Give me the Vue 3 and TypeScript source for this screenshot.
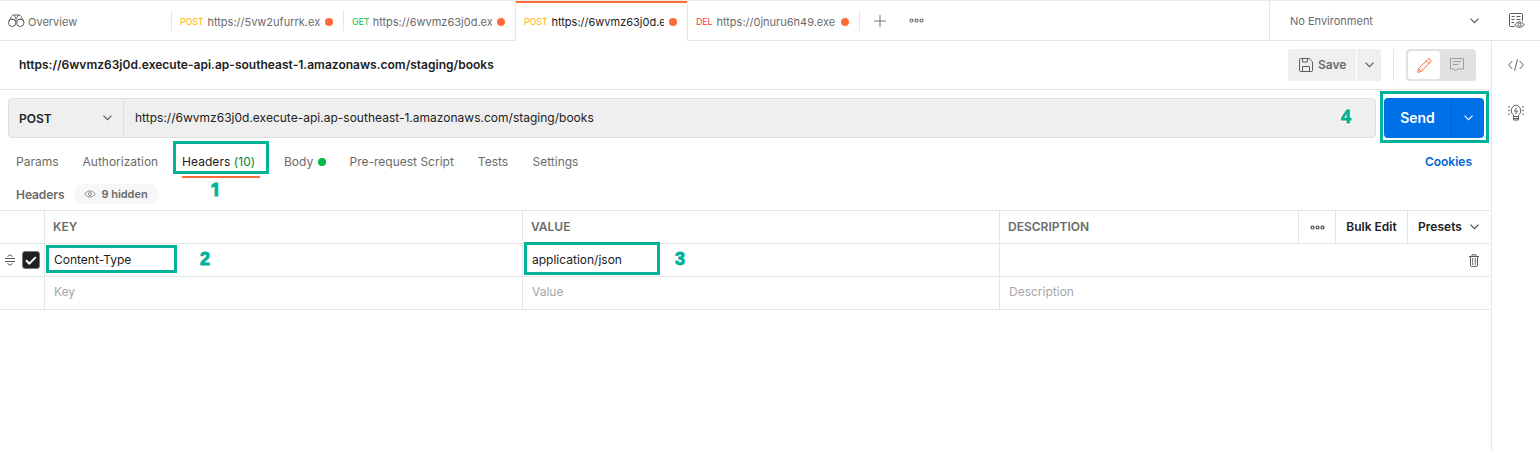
<script setup lang="ts">
interface RequestTab {
  method: 'POST' | 'GET' | 'DEL'
  url: string
  active?: boolean
}

const tabs: RequestTab[] = [
  { method: 'POST', url: 'https://5vw2ufurrk.ex' },
  { method: 'GET', url: 'https://6wvmz63j0d.ex' },
  { method: 'POST', url: 'https://6wvmz63j0d.e', active: true },
  { method: 'DEL', url: 'https://0jnuru6h49.exe' },
]
const url = 'https://6wvmz63j0d.execute-api.ap-southeast-1.amazonaws.com/staging/books'
</script>

<template>
  <div class="app">
    <header class="topbar">
      <div class="overview">
        <svg width="17" height="14" viewBox="0 0 17 14" class="line">
          <circle cx="4.200" cy="8.800" r="3.700" /><circle cx="12.300" cy="8.800" r="3.700" />
          <path d="M.7 7.500 3.500 2.400Q4.200 1 5.500 1h5.500q1.300 0 2 1.400l2.800 5.100M5.500 1Q7 1.300 7.200 3L8.200 5.500 9.300 3Q9.500 1.300 11 1M3.500 5.200Q6.500 4.800 8.200 7.800 10 4.800 13 5.200" stroke-width=".9" />
        </svg>
        <span>Overview</span>
      </div>
      <div v-for="(tab, i) in tabs" :key="i" class="tab" :class="{ active: tab.active, prior: i === 1 }">
        <span class="method" :class="tab.method.toLowerCase()">{{ tab.method }}</span>
        <span class="tab-url">{{ tab.url }}</span>
        <i class="unsaved"></i>
      </div>
      <svg class="plus" width="12" height="12" viewBox="0 0 12 12"><path d="M6 0v12M0 6h12" /></svg>
      <svg class="dots" width="15" height="5" viewBox="0 0 15 5">
        <circle cx="2.500" cy="2.500" r="1.500" /><circle cx="7.500" cy="2.500" r="1.500" /><circle cx="12.500" cy="2.500" r="1.500" />
      </svg>
      <div class="environment">
        <span>No Environment</span>
        <svg class="chev" width="9" height="6" viewBox="0 0 9 6"><path d="M.5.7l4 4 4-4" /></svg>
      </div>
      <div class="env-view">
        <svg width="16" height="16" viewBox="0 0 16 16" class="line">
          <path d="M5.500 13.500h-4a1 1 0 0 1-1-1v-11a1 1 0 0 1 1-1h11a1 1 0 0 1 1 1V8M2.500 3.500h3M7.500 3.500h4M2.500 6.500h3M7.500 6.500h4M2.500 9.500h2.500" />
          <path d="M5.800 11.700Q10.500 5.900 15.300 11.700 10.500 17.200 5.800 11.700z" />
          <circle cx="10.500" cy="11.600" r="1.500" />
        </svg>
      </div>
    </header>

    <div class="body">
      <main>
        <section class="title-row">
          <h1>{{ url }}</h1>
          <div class="save">
            <svg width="14" height="14" viewBox="0 0 14 14" class="line">
              <path d="M1.500.5h8.700l3.300 3.300v8.700a1 1 0 0 1-1 1h-11a1 1 0 0 1-1-1v-11a1 1 0 0 1 1-1zM3.500.5v3.500h5V.5M3.500 13.500v-5h7v5" />
            </svg>
            <span>Save</span>
          </div>
          <div class="save-more"><svg class="chev" width="9" height="6" viewBox="0 0 9 6"><path d="M.5.7l4 4 4-4" /></svg></div>
          <i class="rule"></i>
          <div class="toggle">
            <div class="edit">
              <svg width="15" height="15" viewBox="0 0 15 15">
                <path d="M.6 14.400 1.500 10.700 10.800 1.400q1.200-1.200 2.500.1t.2 2.500L4.200 13.400zM9.400 2.800l2.800 2.800M1.700 10.900l2.400 2.400" />
              </svg>
            </div>
            <div class="comment">
              <svg width="14" height="14" viewBox="0 0 14 14">
                <path d="M.5.5h13v10.500H7.500L5.500 13 3.800 11H.5zM3 3.500h8M3 6.500h5.500" />
              </svg>
            </div>
          </div>
        </section>

        <section class="request-row">
          <div class="request">
            <div class="verb">
              <b>POST</b>
              <svg class="chev" width="9" height="6" viewBox="0 0 9 6"><path d="M.5.7l4 4 4-4" /></svg>
            </div>
            <div class="address">{{ url }}</div>
          </div>
          <div class="send">
            <b>Send</b>
            <div class="send-more"><svg class="chev" width="9" height="6" viewBox="0 0 9 6"><path d="M.5.7l4 4 4-4" /></svg></div>
          </div>
        </section>

        <nav class="sections">
          <span class="s-params">Params</span>
          <span class="s-auth">Authorization</span>
          <span class="s-headers">Headers <em>(10)</em></span>
          <span class="s-body">Body<i></i></span>
          <span class="s-script">Pre-request Script</span>
          <span class="s-tests">Tests</span>
          <span class="s-settings">Settings</span>
          <b class="cookies">Cookies</b>
        </nav>

        <div class="subhead">
          <span class="subtitle">Headers</span>
          <span class="hidden">
            <svg width="12" height="8" viewBox="0 0 12 8">
              <path d="M.6 4Q6-2.400 11.400 4 6 10.400.6 4z" /><circle cx="6" cy="4" r="1.500" />
            </svg>
            <span>9 hidden</span>
          </span>
        </div>

        <div class="grid">
          <div class="row head">
            <div></div>
            <div>KEY</div>
            <div>VALUE</div>
            <div>DESCRIPTION</div>
            <div class="tool">
              <svg class="dots" width="15" height="5" viewBox="0 0 15 5">
                <circle cx="2.500" cy="2.500" r="1.500" /><circle cx="7.500" cy="2.500" r="1.500" /><circle cx="12.500" cy="2.500" r="1.500" />
              </svg>
            </div>
            <div class="tool bulk">Bulk Edit</div>
            <div class="tool presets">
              <span>Presets</span>
              <svg class="chev" width="9" height="6" viewBox="0 0 9 6"><path d="M.5.7l4 4 4-4" /></svg>
            </div>
          </div>
          <div class="row">
            <div class="controls">
              <svg width="10" height="12" viewBox="0 0 10 12" class="line">
                <path d="M0 4.500h10M0 7.500h10M2.500 2.500l2.500-1.700 2.500 1.700M2.500 9.500l2.500 1.700 2.500-1.700" />
              </svg>
              <i class="check">
                <svg width="12" height="9" viewBox="0 0 12 9"><path d="M1 4.300 4.300 7.600 10.800 1.100" /></svg>
              </i>
            </div>
            <div>Content-Type</div>
            <div>application/json</div>
            <div class="last">
              <svg width="10" height="13" viewBox="0 0 10 13" class="line">
                <path d="M0 2.500h10M3 2V.8h4V2M1.500 2.500v9a.9.9 0 0 0 .9.900h5.200a.9.900 0 0 0 .9-.900v-9" /><path d="M3.700 4v7M6.300 4v7" stroke-width=".9" />
              </svg>
            </div>
          </div>
          <div class="row blank">
            <div></div>
            <div>Key</div>
            <div>Value</div>
            <div class="last">Description</div>
          </div>
        </div>
      </main>

      <aside>
        <svg width="16" height="12" viewBox="0 0 16 12" class="line">
          <path d="M4.300 2 .7 6l3.600 4M11.700 2l3.600 4-3.600 4M9.500.3l-3 11.400" />
        </svg>
        <svg width="16" height="17" viewBox="0 0 16 17" class="line">
          <path d="M5.500 12.500v-1.400C4 9.900 3.300 8.700 3.300 6.800 3.300 4 5.400 1.200 8 1.200s4.700 2.800 4.700 5.600c0 1.900-.7 3.100-2.200 4.300v1.400zM5.500 12.500v3.500h5v-3.500M6 14.500h4M8.700 3.700 6.500 7.100h3L7.300 10.200M0 2.500l1.800.700M0 6.500h1.800M0 10.500l1.800-.700M16 2.500l-1.800.700M16 6.500h-1.800M16 10.500l-1.800-.700" />
        </svg>
      </aside>
    </div>

    <div class="mark m1"></div><b class="num n1">1</b>
    <div class="mark m2"></div><b class="num n2">2</b>
    <div class="mark m3"></div><b class="num n3">3</b>
    <div class="mark m4"></div><b class="num n4">4</b>
  </div>
</template>

<style>
body { background: #fff; }
</style>

<style scoped>
* { box-sizing: border-box; }
.app { position: relative; width: 1540px; height: 450px; overflow: hidden; background: #fff; color: #212121; font: 12px/16px Inter, "Liberation Sans", sans-serif; white-space: nowrap; }
svg { display: block; flex: none; fill: none; }
.line { stroke: #5c5c5c; stroke-width: 1; }
.chev { stroke: #555; stroke-width: 1.1; }
.dots { stroke: #6b6b6b; stroke-width: 1.200; }

.topbar { display: flex; height: 41px; border-top: 1px solid #ebebeb; border-bottom: 1px solid #e6e6e6; align-items: center; color: #6b6b6b; font-size: 11px; }
.overview { width: 172px; height: 21px; border-right: 1px solid #e6e6e6; display: flex; align-items: center; padding: 2px 0 0 8px; gap: 3px; }
.overview svg { margin-top: -1px; }
.tab { width: 172px; height: 21px; border-right: 1px solid #e6e6e6; display: flex; align-items: center; padding: 2px 0 0 8px; }
.tab.prior { border-right-color: transparent; width: 171px; }
.tab.prior .unsaved { margin-right: 9px; }
.tab.prior .method { margin-right: 3.300px; }
.tab.active { width: 173px; height: 40px; align-self: flex-start; margin-bottom: -1px; background: #fff; border-left: 1px solid #e6e6e6; border-right: 1px solid #e6e6e6; color: #212121; box-shadow: inset 0 2px #ff6c37; }
.method { font-size: 9px; line-height: 14px; letter-spacing: -.2px; margin-right: 4px; }
.post { color: #ffb400; }
.get { color: #0cbb52; }
.del { color: #f23b3b; }
.tab-url { flex: 1; overflow: hidden; }
.unsaved { width: 8px; height: 8px; border-radius: 50%; background: #ff6c37; margin: 0 10px 0 5px; }
.plus { stroke: #777; margin-left: 14px; }
.topbar .dots { margin-left: 22.500px; }
.environment { margin-left: auto; width: 222px; height: 40px; border-left: 1px solid #e6e6e6; display: flex; align-items: center; justify-content: space-between; padding: 0 12px 0 20px; }
.environment .chev { margin-top: 1px; }
.env-view { width: 49px; padding: 1px 0 0 18px; }

.body { display: flex; height: 409px; }
main { width: 1492px; border-right: 1px solid #e6e6e6; }
aside { width: 48px; padding: 18px 0 0 16px; display: flex; flex-direction: column; gap: 33px; }

.title-row { height: 49px; border-bottom: 1px solid #e6e6e6; display: flex; align-items: center; padding: 0 15px 0 19px; }
h1 { margin: 0; font-size: 12px; line-height: 16px; font-weight: 600; flex: 1; letter-spacing: .014px; }
.save { width: 68px; height: 32px; border-radius: 3px 0 0 3px; background: #efefef; display: flex; align-items: center; gap: 5px; padding-left: 11px; color: #6b6b6b; font-weight: 600; }
.save-more { width: 24px; height: 32px; margin-left: 1px; border-radius: 0 3px 3px 0; background: #efefef; display: flex; align-items: center; justify-content: center; }
.rule { width: 1px; height: 32px; background: #e6e6e6; margin: 0 12px; }
.toggle { width: 70px; height: 32px; border-radius: 4px; background: #e1e1e1; display: flex; padding: 2px; }
.edit { width: 32px; height: 28px; border-radius: 3px; background: #fff; display: grid; place-items: center; stroke: #ff6c37; }
.comment { flex: 1; display: grid; place-items: center; stroke: #a0a0a0; }

.request-row { display: flex; justify-content: space-between; padding: 8px 7px 0 8px; height: 48px; }
.request { width: 1368px; height: 40px; border: 1px solid #dedede; border-radius: 4px; background: #efefef; display: flex; }
.verb { width: 115px; border-right: 1px solid #dedede; display: flex; align-items: center; justify-content: space-between; padding: 0 11px 0 10px; }
.verb b { font-weight: 600; padding-top: 1px; }
.address { padding: 11px; letter-spacing: .008px; }
.send { width: 100px; height: 40px; border-radius: 4px; background: #0070e8; color: #fff; display: flex; align-items: center; }
.send b { width: 67px; text-align: center; font-size: 14px; font-weight: 600; }
.send-more { flex: 1; height: 40px; border-left: 1px solid #0060cf; display: grid; place-items: center; }
.send .chev { stroke: #fff; }

.sections { display: flex; height: 41px; padding: 16px 19px 0 16px; color: #6b6b6b; }
.sections span { margin-right: 24px; }
.sections .s-auth { margin-right: 23.800px; }
.s-headers { height: 24px; border-bottom: 2px solid #ff6c37; color: #212121; width: 78px; letter-spacing: .06px; }
.s-headers em { font-style: normal; color: #007f31; }
.s-body { display: flex; align-items: center; height: 16px; gap: 4.500px; }
.sections .s-body { margin-right: 23.800px; }
.s-body i { width: 8px; height: 8px; border-radius: 50%; background: #00b84a; }
.sections .s-tests { margin-right: 24.400px; }
.cookies { margin-left: auto; font-weight: 600; color: #0265d2; }
.subhead { height: 31px; display: flex; padding: 5px 0 0 16px; gap: 9px; }
.subtitle { padding-top: 3px; font-weight: 600; color: #6b6b6b; letter-spacing: -.06px; }
.hidden { width: 85px; height: 20px; border-radius: 10px; background: #f7f7f7; display: flex; align-items: center; gap: 6px; padding-left: 10px; font-size: 11px; font-weight: 600; letter-spacing: -.05px; color: #6b6b6b; stroke: #8d8d8d; }
.hidden span { stroke: none; }

.grid { border-top: 1px solid #e6e6e6; }
.row { display: grid; grid-template-columns: 44px 478px 477px 299px 37px 72px 84px; height: 33px; border-bottom: 1px solid #e6e6e6; }
.row > div { display: flex; align-items: center; padding-left: 9px; border-left: 1px solid #e6e6e6; }
.row > div:first-child { border-left: 0; padding-left: 5px; }
.row.head > div { padding-left: 8px; font-weight: 600; color: #6b6b6b; }
.row.head > .tool { padding: 0; color: #212121; justify-content: center; }
.row.head > .presets { gap: 8px; padding-right: 2px; }
.tool .dots, .tool .chev { stroke: #444; }
.row > .last { grid-column: 4 / -1; }
.last svg { margin-left: 460px; }
.controls { gap: 7px; }
.check { width: 18px; height: 18px; border-radius: 3px; background: #212121; border: 1px solid #777; display: grid; place-items: center; }
.check svg { stroke: #fff; stroke-width: 2; }
.row.blank > div { color: #a6a6a6; padding-bottom: 2px; }

.mark { position: absolute; border: 3px solid #00b398; }
.m1 { left: 173px; top: 141px; width: 96px; height: 33px; }
.m2 { left: 46px; top: 245px; width: 131px; height: 28px; }
.m3 { left: 524px; top: 242px; width: 136px; height: 33px; }
.m4 { left: 1380px; top: 91px; width: 109px; height: 52px; }
.num { position: absolute; font: bold 18px/20px "Liberation Sans", Arial, sans-serif; color: #00b398; -webkit-text-stroke: .9px #00b398; text-shadow: 0 0 2px #fff, 1px 1px 1px #fff, -1px -1px 1px #fff, 2px 0 1px #fff, -2px 0 1px #fff, 0 2px 1px #fff; }
.n1 { left: 211px; top: 180px; font-family: Inter, sans-serif; }
.n2 { left: 200px; top: 249px; }
.n3 { left: 675px; top: 249px; }
.n4 { left: 1341px; top: 107px; }
</style>
